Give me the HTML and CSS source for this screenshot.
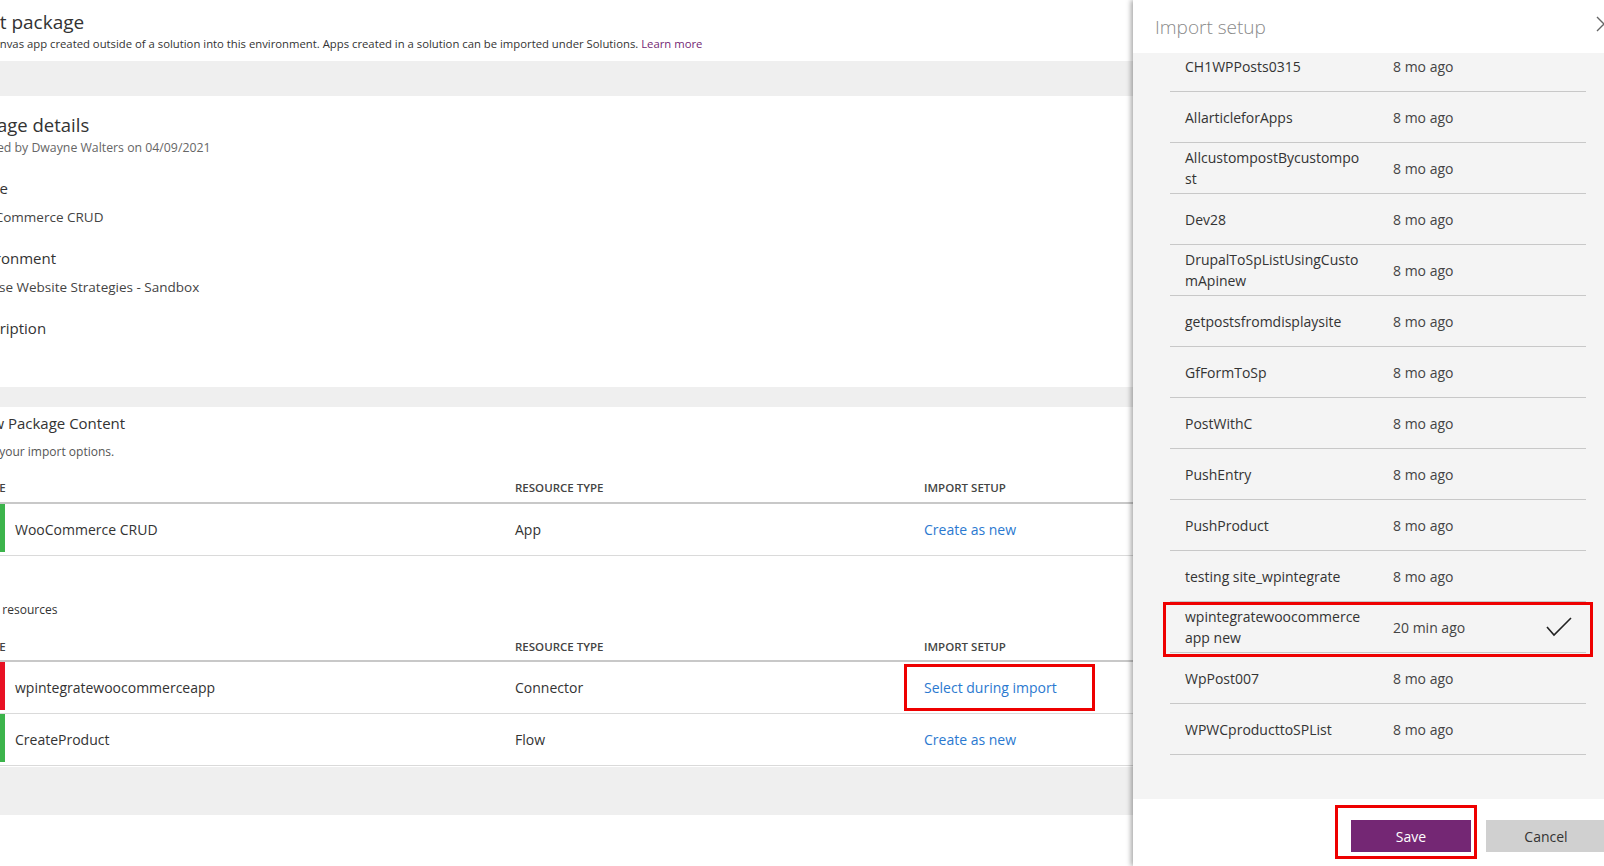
FILE: index.html
```html
<!DOCTYPE html>
<html lang="en">
<head>
  <meta charset="UTF-8" />
  <title>Import package</title>
  <link rel="stylesheet" href="styles.css">
</head>
<body>
  <main class="page">
    <header class="page-header">
      <h1>Import package</h1>
      <p>Import a canvas app created outside of a solution into this environment. Apps created in a solution can be imported under Solutions. <a href="#" class="learn">Learn more</a></p>
    </header>

    <div class="band band-top"></div>

    <section class="details">
      <h2>Package details</h2>
      <p class="meta">Created by Dwayne Walters on 04/09/2021</p>
      <div class="field">
        <div class="field-label">Name</div>
        <div class="field-value">WooCommerce CRUD</div>
      </div>
      <div class="field">
        <div class="field-label">Environment</div>
        <div class="field-value">Diverse Website Strategies - Sandbox</div>
      </div>
      <div class="field">
        <div class="field-label">Description</div>
        <div class="field-value"></div>
      </div>
    </section>

    <div class="band band-mid"></div>

    <section class="content">
      <h3>Review Package Content</h3>
      <p class="hint">Select your import options.</p>

      <div class="grid">
        <div class="grid-head">
          <span class="col-name">Name</span>
          <span>Resource type</span>
          <span>Import setup</span>
        </div>
        <div class="grid-row">
          <div class="col-name"><i class="bar ok"></i><span>WooCommerce CRUD</span></div>
          <div>App</div>
          <div><a href="#" class="action">Create as new</a></div>
        </div>
      </div>

      <p class="group-label">Related resources</p>

      <div class="grid">
        <div class="grid-head">
          <span class="col-name">Name</span>
          <span>Resource type</span>
          <span>Import setup</span>
        </div>
        <div class="grid-row">
          <div class="col-name"><i class="bar bad"></i><span>wpintegratewoocommerceapp</span></div>
          <div>Connector</div>
          <div class="marked"><a href="#" class="action">Select during import</a></div>
        </div>
        <div class="grid-row">
          <div class="col-name"><i class="bar ok"></i><span>CreateProduct</span></div>
          <div>Flow</div>
          <div><a href="#" class="action">Create as new</a></div>
        </div>
      </div>
    </section>

    <div class="band band-bottom"></div>
  </main>

  <aside class="panel" aria-label="Import setup">
    <div class="panel-head">
      <h2>Import setup</h2>
      <button class="close" aria-label="Close">
        <svg width="16" height="16" viewBox="0 0 16 16"><path d="M1 1 L15 15 M15 1 L1 15" stroke="#666" stroke-width="1.4" fill="none"/></svg>
      </button>
    </div>

    <div class="panel-body">
      <ul class="list">
        <li><span class="item-name">CH1WPPosts0315</span><span class="item-date">8 mo ago</span></li>
        <li><span class="item-name">AllarticleforApps</span><span class="item-date">8 mo ago</span></li>
        <li><span class="item-name">AllcustompostBycustompost</span><span class="item-date">8 mo ago</span></li>
        <li><span class="item-name">Dev28</span><span class="item-date">8 mo ago</span></li>
        <li><span class="item-name">DrupalToSpListUsingCustomApinew</span><span class="item-date">8 mo ago</span></li>
        <li><span class="item-name">getpostsfromdisplaysite</span><span class="item-date">8 mo ago</span></li>
        <li><span class="item-name">GfFormToSp</span><span class="item-date">8 mo ago</span></li>
        <li><span class="item-name">PostWithC</span><span class="item-date">8 mo ago</span></li>
        <li><span class="item-name">PushEntry</span><span class="item-date">8 mo ago</span></li>
        <li><span class="item-name">PushProduct</span><span class="item-date">8 mo ago</span></li>
        <li><span class="item-name">testing site_wpintegrate</span><span class="item-date">8 mo ago</span></li>
        <li class="selected">
          <span class="item-name">wpintegratewoocommerce app new</span><span class="item-date">20 min ago</span>
          <svg class="check" width="26" height="20" viewBox="0 0 26 20"><path d="M1 10 L8 18 L25 1" stroke="#222" stroke-width="1.6" fill="none"/></svg>
        </li>
        <li><span class="item-name">WpPost007</span><span class="item-date">8 mo ago</span></li>
        <li><span class="item-name">WPWCproducttoSPList</span><span class="item-date">8 mo ago</span></li>
      </ul>
    </div>

    <div class="panel-foot">
      <button class="btn btn-save">Save</button>
      <button class="btn btn-cancel">Cancel</button>
    </div>
  </aside>
</body>
</html>
```

FILE: styles.css
```css
/* Base */
html, body {
  height: 100%;
  overflow: hidden;
}
body {
  margin: 0;
  font-family: 'Open Sans', 'Noto Sans', sans-serif;
  color: #333;
  background: #fff;
  position: relative;
}
a {
  text-decoration: none;
}


/* Main page (scrolled a little to the left) */
.page {
  margin-left: -58px;
  width: 1240px;
}
.page-header {
  height: 61px;
  padding-top: 10px;
  box-sizing: border-box;
}
.page-header h1 {
  margin: 0 0 0 4px;
  font-size: 19px;
  line-height: 24px;
  font-weight: 400;
  color: #333;
}
.page-header p {
  margin: 2px 0 0 -2px;
  font-size: 11.3px;
  line-height: 16px;
  color: #333;
}
.learn {
  color: #742774;
}

.band {
  background: #efefef;
}
.band-top { height: 35px; }
.band-mid { height: 20px; }
.band-bottom { height: 48px; }


/* Package details */
.details {
  height: 291px;
  padding: 17px 0 0 24px;
  box-sizing: border-box;
}
.details h2 {
  margin: 0 0 0 -9px;
  font-size: 18.5px;
  line-height: 24px;
  font-weight: 400;
}
.meta {
  margin: 2.5px 0 0;
  font-size: 12.3px;
  line-height: 16px;
  color: #666;
}
.field {
  margin-top: 22.5px;
}
.field-label {
  font-size: 15px;
  line-height: 20px;
  color: #333;
}
.field-value {
  margin-top: 9.5px;
  font-size: 13.5px;
  line-height: 18px;
  min-height: 18px;
  color: #444;
}


/* Package content */
.content {
  padding: 6px 0 1px 18px;
}
.content h3 {
  margin: 0 0 0 -5px;
  font-size: 15px;
  line-height: 20px;
  font-weight: 400;
}
.hint {
  margin: 11px 0 0 3px;
  font-size: 12px;
  line-height: 16px;
  color: #555;
}
.grid {
  margin-top: 20px;
}
.grid-head,
.grid-row {
  display: grid;
  grid-template-columns: 555px 409px 1fr;
}
.grid-head {
  font-size: 11.5px;
  line-height: 16px;
  font-weight: 600;
  text-transform: uppercase;
  color: #444;
  padding-bottom: 5.5px;
  border-bottom: 2px solid #c8c8c8;
}
.grid-head .col-name {
  padding-left: 12px;
}
.grid-row {
  height: 51px;
  align-items: center;
  border-bottom: 1px solid #dadada;
  font-size: 14px;
  color: #333;
}
.grid-row .col-name {
  display: flex;
  align-items: center;
  height: 100%;
  padding-left: 40px;
}
.bar {
  width: 5px;
  align-self: stretch;
  margin-bottom: 3px;
}
.bar.ok { background: #3cb44b; }
.bar.bad { background: #e81123; }
.grid-row .col-name span {
  margin-left: 10px;
}
.action {
  color: #2b79d0;
}
.marked {
  position: relative;
}
.marked::after {
  content: '';
  position: absolute;
  left: -20px;
  top: -14px;
  width: 191px;
  height: 47px;
  box-sizing: border-box;
  border: 3px solid #ee0000;
}
.group-label {
  margin: 46px 0 0 -3px;
  font-size: 12px;
  line-height: 16px;
  color: #333;
}
.group-label + .grid {
  margin-top: 21px;
}


/* Import setup side panel */
.panel {
  position: absolute;
  top: 0;
  left: 1133px;
  width: 495px;
  height: 866px;
  background: #fff;
  box-shadow: -2px 0 5px rgba(0, 0, 0, 0.35);
  display: flex;
  flex-direction: column;
}
.panel-head {
  height: 53px;
  padding: 14.5px 0 0 22px;
  box-sizing: border-box;
  position: relative;
}
.panel-head h2 {
  margin: 0;
  font-size: 19px;
  line-height: 24px;
  font-weight: 300;
  color: #8a8a8a;
}
.close {
  position: absolute;
  top: 16px;
  right: 16px;
  padding: 0;
  border: none;
  background: none;
  width: 16px;
  height: 16px;
}
.close svg {
  display: block;
}
.panel-body {
  flex: 1;
  background: #f4f4f4;
  overflow: hidden;
}
.list {
  list-style: none;
  margin: -12px 42px 0 37px;
  padding: 0;
}
.list li {
  display: flex;
  align-items: center;
  height: 50px;
  border-bottom: 1px solid #c8c8c8;
  font-size: 14px;
  position: relative;
}
.item-name {
  width: 178px;
  padding-left: 15px;
  margin-right: 30px;
  line-height: 21px;
  word-break: break-all;
  color: #333;
}
.item-date {
  color: #444;
}
.check {
  margin-left: auto;
  margin-right: 14px;
}
.list li.selected::after {
  content: '';
  position: absolute;
  left: -7px;
  right: -7px;
  top: 0;
  bottom: -5px;
  border: 3px solid #ee0000;
}
.panel-foot {
  height: 67px;
  display: flex;
  justify-content: flex-end;
  align-items: flex-start;
  gap: 15px;
  padding: 21px 22px 0 0;
  box-sizing: border-box;
}
.btn {
  width: 120px;
  height: 32px;
  border: none;
  font-family: inherit;
  font-size: 14px;
  cursor: pointer;
}
.btn-save {
  background: #742774;
  color: #fff;
  position: relative;
}
.btn-save::after {
  content: '';
  position: absolute;
  left: -16px;
  right: -6px;
  top: -15px;
  bottom: -7px;
  border: 3px solid #ee0000;
}
.btn-cancel {
  background: #d0d0d0;
  color: #333;
}
```
